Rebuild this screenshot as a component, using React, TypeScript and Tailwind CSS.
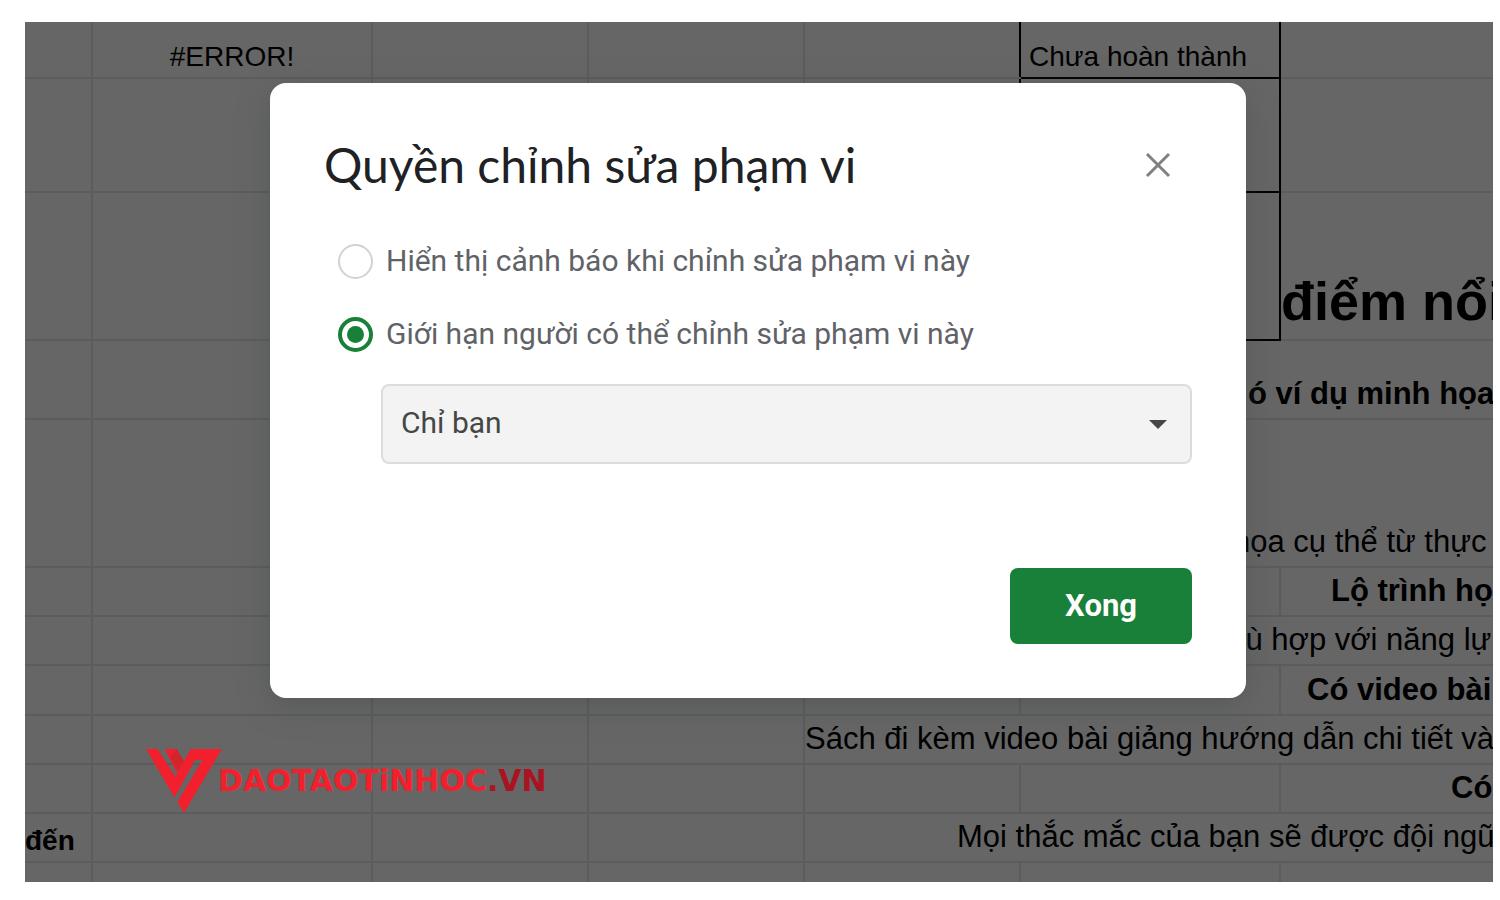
import React, { useState } from 'react';

const GRID = 'border-2 border-[#e5e5e5]';
const MARKED = 'border-2 border-black';
const LABEL_TEXT = 'align-bottom pb-1 text-[28px] leading-8';
const BODY_TEXT = 'align-bottom pb-1.5 text-[31px] leading-9';
const HEADING_TEXT = 'align-bottom pb-1.5 text-[31px] leading-9 font-bold';

interface CellProps {
  children?: React.ReactNode;
  span?: number;
  className?: string;
}

const Cell: React.FC<CellProps> = ({ children, span = 1, className = GRID }) => (
  <td colSpan={span} className={`overflow-hidden whitespace-nowrap ${className}`}>
    {children}
  </td>
);

const EmptyCells = ({ count }: { count: number }) => (
  <>
    {Array.from({ length: count }, (_, index) => (
      <Cell key={index} />
    ))}
  </>
);

const Sheet = () => (
  <table className="w-full table-fixed border-collapse border-hidden font-['Liberation_Sans',sans-serif] text-black">
    <colgroup>
      <col className="w-[67px]" />
      <col className="w-[280px]" />
      <col className="w-[216px]" />
      <col className="w-[216px]" />
      <col className="w-[216px]" />
      <col className="w-[260px]" />
      <col />
    </colgroup>
    <tbody>
      <tr className="h-14">
        <Cell />
        <Cell className={`${GRID} ${LABEL_TEXT} text-center`}>#ERROR!</Cell>
        <EmptyCells count={2} />
        <Cell className={`${GRID} border-r-black`} />
        <Cell className={`${MARKED} ${LABEL_TEXT} pl-2`}>Chưa hoàn thành</Cell>
        <Cell />
      </tr>
      <tr className="h-[114px]">
        <EmptyCells count={4} />
        <Cell className={`${GRID} border-r-black`} />
        <Cell className={MARKED} />
        <Cell />
      </tr>
      <tr className="h-[148px]">
        <EmptyCells count={4} />
        <Cell className={`${GRID} border-r-black`} />
        <Cell className={MARKED} />
        <Cell className={`${GRID} pb-1.5 align-bottom text-[54px] leading-[64px] font-bold`}>điểm nổi</Cell>
      </tr>
      <tr className="h-[79px]">
        <EmptyCells count={5} />
        <Cell span={2} className={`${GRID} ${HEADING_TEXT} pl-[227px]`}>ó ví dụ minh họa</Cell>
      </tr>
      <tr className="h-[148px]">
        <EmptyCells count={5} />
        <Cell span={2} className={`${GRID} ${BODY_TEXT} pl-[212px]`}>họa cụ thể từ thực</Cell>
      </tr>
      <tr className="h-[49px]">
        <EmptyCells count={6} />
        <Cell className={`${GRID} ${HEADING_TEXT} pl-[50px]`}>Lộ trình họ</Cell>
      </tr>
      <tr className="h-[49px]">
        <EmptyCells count={5} />
        <Cell span={2} className={`${GRID} ${BODY_TEXT} pl-[190px]`}>phù hợp với năng lự</Cell>
      </tr>
      <tr className="h-[50px]">
        <EmptyCells count={6} />
        <Cell className={`${GRID} ${HEADING_TEXT} pl-[26px]`}>Có video bài</Cell>
      </tr>
      <tr className="h-[49px]">
        <EmptyCells count={4} />
        <Cell span={3} className={`${GRID} ${BODY_TEXT}`}>Sách đi kèm video bài giảng hướng dẫn chi tiết và</Cell>
      </tr>
      <tr className="h-[49px]">
        <EmptyCells count={6} />
        <Cell className={`${GRID} ${HEADING_TEXT} pl-[170px]`}>Có</Cell>
      </tr>
      <tr className="h-[49px]">
        <Cell className={`${GRID} ${LABEL_TEXT} font-bold`}>đến</Cell>
        <EmptyCells count={3} />
        <Cell span={3} className={`${GRID} ${BODY_TEXT} pl-[152px]`}>Mọi thắc mắc của bạn sẽ được đội ngũ</Cell>
      </tr>
      <tr className="h-5">
        <EmptyCells count={7} />
      </tr>
    </tbody>
  </table>
);

const Logo = () => (
  <div className="absolute bottom-[69px] left-[121px] flex items-center">
    <svg viewBox="46 57 229 193" className="h-16 w-[76px]" aria-hidden="true">
      <path d="M102 57H138L160 94L138 127Z" fill="#f21f2c" />
      <path d="M138 57L160 94L143 122L118 82Z" fill="#d3232b" />
      <path d="M46 57H81L134 140L181 57H275L160 250L141 216L216 90H194L132 203Z" fill="#f21f2c" />
    </svg>
    <span className="-ml-1 font-['DejaVu_Sans',sans-serif] text-[30px] leading-8 font-bold text-[#f21f2c]">
      DAOTAOTiNHOC<span className="text-[#a8141f]">.VN</span>
    </span>
  </div>
);

interface RadioOptionProps {
  id: string;
  label: string;
  checked: boolean;
  onChange: () => void;
}

const RadioOption: React.FC<RadioOptionProps> = ({ id, label, checked, onChange }) => (
  <div className="flex items-center gap-[13px]">
    <input
      id={id}
      type="radio"
      name="permission"
      checked={checked}
      onChange={onChange}
      className="size-[35px] shrink-0 appearance-none rounded-full border-2 border-[#d2d2d2] bg-white checked:border-4 checked:border-[#188038] checked:bg-[#188038] checked:bg-clip-content checked:p-[5px]"
    />
    <label htmlFor={id} className="text-[30px] leading-9 text-[#5f6368]">{label}</label>
  </div>
);

const App = () => {
  const [mode, setMode] = useState<'warn' | 'restrict'>('restrict');

  return (
    <div className="min-h-screen bg-white pt-[22px] pr-[7px] pb-[18px] pl-[25px]">
      <div className="relative overflow-hidden">
        <Sheet />

        <div className="absolute inset-0 flex items-start justify-center bg-black/60 pt-[61px] pr-[26px] pl-6">
          <div
            role="dialog"
            aria-labelledby="dialog-title"
            className="w-full max-w-[976px] rounded-2xl bg-white px-[54px] pt-[52px] pb-[54px] font-[Roboto,sans-serif] shadow-[0_8px_32px_rgba(60,70,67,0.35)]"
          >
            <div className="flex items-center justify-between pr-5">
              <h1 id="dialog-title" className="font-[Lato,sans-serif] text-[48px] leading-[60px] text-[#202124]">
                Quyền chỉnh sửa phạm vi
              </h1>
              <button aria-label="Đóng" className="p-0 text-[#808080]">
                <svg viewBox="0 0 28 28" className="size-7" fill="none" stroke="currentColor" strokeWidth="3">
                  <path d="M3 3L25 25M25 3L3 25" />
                </svg>
              </button>
            </div>

            <div className="mt-12 flex flex-col gap-[37px] pl-[14px]">
              <RadioOption
                id="warn"
                label="Hiển thị cảnh báo khi chỉnh sửa phạm vi này"
                checked={mode === 'warn'}
                onChange={() => setMode('warn')}
              />
              <RadioOption
                id="restrict"
                label="Giới hạn người có thể chỉnh sửa phạm vi này"
                checked={mode === 'restrict'}
                onChange={() => setMode('restrict')}
              />
            </div>

            <div className="relative mt-8 ml-[57px]">
              <select
                aria-label="Giới hạn người có thể chỉnh sửa phạm vi này"
                className="h-20 w-full appearance-none rounded-lg border-2 border-[#dadce0] bg-[#f3f3f3] px-[18px] pb-1 text-[30px] text-[#444746]"
              >
                <option>Chỉ bạn</option>
              </select>
              <svg viewBox="0 0 18 9" className="pointer-events-none absolute top-9 right-[25px] h-[9px] w-[18px]" fill="#444746">
                <path d="M0 0H18L9 9Z" />
              </svg>
            </div>

            <div className="mt-[104px] flex justify-end">
              <button className="rounded-lg bg-[#188038] px-[55px] py-5 text-[31px] leading-9 font-bold text-white">Xong</button>
            </div>
          </div>
        </div>

        <Logo />
      </div>
    </div>
  );
};

export default App;
